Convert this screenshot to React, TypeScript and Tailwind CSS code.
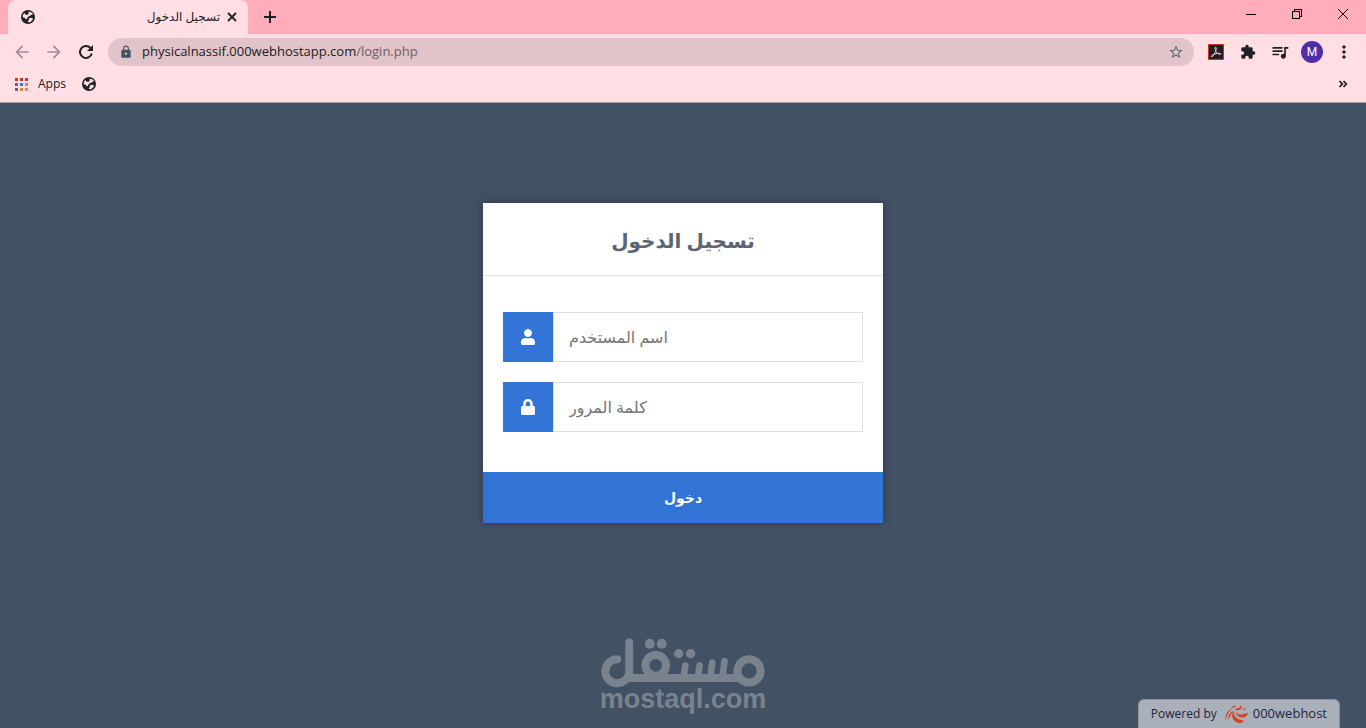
import React from 'react';
import { FaLock, FaUser } from 'react-icons/fa';
import {
  MdArrowBack,
  MdArrowForward,
  MdExtension,
  MdLock,
  MdMoreVert,
  MdQueueMusic,
  MdStarOutline,
} from 'react-icons/md';

const APP_DOTS = [
  '#c5381f', '#c5381f', '#c5381f',
  '#5b6574', '#2f74e0', '#d98a3a',
  '#5b6574', '#d98a3a', '#d98a3a',
];

// Default favicon: dark globe with light continents
const Globe: React.FC = () => (
  <svg viewBox="0 0 14 14" className="size-[14px]">
    <circle cx="7" cy="7" r="7" fill="#202124" />
    <path
      d="M7.500 1.700C9.500 1.500 11.300 2.600 12.200 4.300L10.800 4.600 9.400 5.800 7.600 5.900 7.400 7.400 5.800 7.600 6.200 9 4.800 9.300 3.600 7.700 1.700 7.200C1.600 5.600 2.300 4 3.400 3L4.400 4.600 6.200 5 7.800 3.600z"
      fill="#ffdee4"
    />
    <path d="M8 8.200l2.400-.4 1.700.9c-.7 1.900-2.200 3.200-4.100 3.600l-1.400-.5 1-1.400z" fill="#ffdee4" />
  </svg>
);

const TabStrip: React.FC = () => (
  <div className="flex h-[34px] items-stretch bg-[#ffacbb] pl-2">
    <div className="flex w-60 items-center rounded-t-lg bg-[#ffdee4] pr-2 pl-[13px]">
      <Globe />
      <span dir="rtl" className="flex-1 pr-1 text-right text-xs">
        تسجيل الدخول
      </span>
      <button type="button" aria-label="Close tab">
        <svg viewBox="0 0 16 16" className="size-4" stroke="#202124" strokeWidth="1.800">
          <path d="M4 4l8 8M12 4l-8 8" />
        </svg>
      </button>
    </div>
    <button type="button" aria-label="New tab" className="px-3">
      <svg viewBox="0 0 20 20" className="size-5" stroke="#202124" strokeWidth="2">
        <path d="M10 4v12M4 10h12" />
      </svg>
    </button>
    {/* Window controls */}
    <div className="ml-auto flex items-center pb-[6px] text-black">
      <button type="button" aria-label="Minimize" className="flex w-[46px] justify-center">
        <svg viewBox="0 0 10 10" className="size-[10px]" stroke="currentColor" shapeRendering="crispEdges">
          <path d="M0 5.5h10" />
        </svg>
      </button>
      <button type="button" aria-label="Restore" className="flex w-[46px] justify-center">
        <svg viewBox="0 0 10 10" className="size-[10px]" fill="none" stroke="currentColor" shapeRendering="crispEdges">
          <path d="M.5 2.5h7v7h-7zM2.5 2.5v-2h7v7h-2" />
        </svg>
      </button>
      <button type="button" aria-label="Close" className="flex w-[46px] justify-center">
        <svg viewBox="0 0 10 10" className="size-[10px]" stroke="currentColor">
          <path d="M0 0l10 10M10 0L0 10" />
        </svg>
      </button>
    </div>
  </div>
);

const Toolbar: React.FC = () => (
  <div className="flex h-9 items-center pr-[6px] pl-3 text-[#202124]">
    <div className="flex items-center gap-3">
      <button type="button" aria-label="Back">
        <MdArrowBack className="size-5 text-[#9a8f98]" />
      </button>
      <button type="button" aria-label="Forward">
        <MdArrowForward className="size-5 text-[#9a8f98]" />
      </button>
      <button type="button" aria-label="Reload">
        <svg viewBox="0 0 20 20" className="size-5" fill="none" stroke="currentColor" strokeWidth="2">
          <path d="M15.800 11.500A6 6 0 1 1 14.500 6" />
          <path d="M17 3v6h-6z" fill="currentColor" stroke="none" />
        </svg>
      </button>
    </div>
    <div className="ml-3 flex h-7 flex-1 items-center rounded-full bg-[#e0c4c9] px-[10px]">
      <MdLock className="mx-px size-[14px] text-[#435165]" />
      <span className="flex-1 pl-2 text-[13px]">
        physicalnassif.000webhostapp.com<span className="text-[#6b6068]">/login.php</span>
      </span>
      <button type="button" aria-label="Bookmark this page">
        <MdStarOutline className="size-4 text-[#5b6574]" />
      </button>
    </div>
    <div className="ml-[6px] grid grid-cols-5">
      <button type="button" aria-label="Adobe Acrobat" className="flex w-8 items-center justify-center">
        <svg viewBox="0 0 16 16" className="size-4" fill="none">
          <path d="M.5.5h15v15H.5z" fill="#241c22" stroke="#c5381f" />
          <path
            d="M7.6 3.2c1.200 0 .6 3.200-.7 5.700-1.100 2.200-2.600 4.200-3.500 3.800-1-.6 1.300-2.300 4.500-3 3-.7 5.200-.4 5 .4-.3 1-3-.2-4.500-2C7 6.600 6.700 3.200 7.600 3.200z"
            stroke="#e8cdd6"
          />
        </svg>
      </button>
      <button type="button" aria-label="Extensions" className="flex w-8 items-center justify-center">
        <MdExtension className="size-4" />
      </button>
      <button type="button" aria-label="Media control" className="flex w-8 items-center justify-center">
        <MdQueueMusic className="size-5" />
      </button>
      <button type="button" aria-label="Profile" className="flex w-8 items-center justify-center">
        <span className="flex size-[22px] items-center justify-center rounded-full bg-[#512da8] font-[Roboto,sans-serif] text-xs text-white">
          M
        </span>
      </button>
      <button type="button" aria-label="Menu" className="flex w-8 items-center justify-center">
        <MdMoreVert className="size-5" />
      </button>
    </div>
  </div>
);

const BookmarksBar: React.FC = () => (
  <div className="flex h-8 items-center pr-[18px] pb-1 pl-[15px] text-[#202124]">
    <button type="button" className="flex items-center gap-[10px] text-xs">
      <span className="grid grid-cols-3 gap-[2px]">
        {APP_DOTS.map((color, i) => (
          <span key={i} className="size-[3px]" style={{ backgroundColor: color }} />
        ))}
      </span>
      Apps
    </button>
    <button type="button" aria-label="Bookmark" className="ml-4">
      <Globe />
    </button>
    <button type="button" aria-label="More bookmarks" className="ml-auto">
      <svg viewBox="0 0 10 8" className="h-2 w-[10px]" fill="none" stroke="currentColor" strokeWidth="1.800">
        <path d="M1.500 1l2.800 3-2.800 3M5.500 1l2.800 3-2.800 3" />
      </svg>
    </button>
  </div>
);

interface FieldProps {
  id: string;
  type: string;
  placeholder: string;
  icon: React.ReactNode;
}

const Field: React.FC<FieldProps> = ({ id, type, placeholder, icon }) => (
  <div className="flex h-[50px]">
    <label
      htmlFor={id}
      aria-label={placeholder}
      className="flex w-[50px] items-center justify-center bg-[#3274d6] text-white"
    >
      {icon}
    </label>
    <input
      id={id}
      type={type}
      placeholder={placeholder}
      className="min-w-0 flex-1 border border-[#dee0e4] px-[15px] text-base outline-none placeholder:text-[#757575]"
    />
  </div>
);

const LoginCard: React.FC = () => (
  <div className="w-full max-w-[400px] bg-white shadow-[0_0_9px_rgba(0,0,0,0.3)]">
    <h1 className="border-b border-[#dee0e4] pt-[22px] pb-[18px] text-center text-xl leading-8 font-semibold text-[#5b6574]">
      تسجيل الدخول
    </h1>
    <form onSubmit={(e) => e.preventDefault()}>
      <div className="flex flex-col gap-5 px-5 pt-9 pb-10">
        <Field id="username" type="text" placeholder="اسم المستخدم" icon={<FaUser className="size-4" />} />
        <Field id="password" type="password" placeholder="كلمة المرور" icon={<FaLock className="size-4" />} />
      </div>
      <button type="submit" className="block h-[51px] w-full bg-[#3274d6] text-sm font-bold text-white">
        دخول
      </button>
    </form>
  </div>
);

const Watermark: React.FC = () => (
  <div className="pointer-events-none absolute inset-x-0 bottom-[18px] flex flex-col items-center text-[#7a828d]">
    <svg viewBox="62 35 494 150" className="h-[50px] w-[164px]" fill="none" stroke="currentColor" strokeWidth="24" strokeLinecap="round">
      <path d="M147 48v86a36 36 0 1 1-36-35" />
      <path d="M140 155h346" strokeLinecap="butt" />
      <circle cx="227" cy="117" r="31" />
      <circle cx="508" cy="134" r="35" />
      <path d="M316 118l-5 34M359 118l-5 34M397 109l-5 43M434 104l-6 48" strokeWidth="20" />
      <g fill="currentColor" stroke="none">
        <circle cx="209" cy="52" r="15" />
        <circle cx="245" cy="52" r="15" />
        <circle cx="296" cy="82" r="14" />
        <circle cx="332" cy="82" r="14" />
      </g>
    </svg>
    <span className="font-['Liberation_Sans',Arial,sans-serif] text-[27px] leading-[22px] font-bold">mostaql.com</span>
  </div>
);

const HostBadge: React.FC = () => (
  <a
    href="#"
    className="absolute right-[26px] bottom-0 flex h-[29px] items-center rounded-t-md border border-b-0 border-[#8b93a0] bg-[#a9b0ba] px-3 text-xs text-[#1f2440]"
  >
    Powered by
    <svg viewBox="0 0 24 20" className="mr-1 ml-2 h-5 w-6" fill="#d8401f">
      <path d="M.5 17C0 10 3 5 9 4.500 4 6.500 2 10 .5 17z" />
      <path d="M3.500 16C3 11 5 8 9 7 6 9.500 5 12 3.500 16z" />
      <path d="M8.500 7c-3.500 6 .5 11 5.500 12 2 .4 4-.6 4.500-2.800C13 16.500 8.500 13 8.500 7z" />
      <path d="M11 6.500c.5 4 4 5.500 12 2.200-.5 3.400-3 5-6 4.800-4-.3-6.500-3.300-6-7z" />
      <path d="M9.500 4.500c3 .5 5.500-.5 6.500-3.500 2 2.500-.5 5.500-3.500 5.200-1.400-.2-2.300-.8-3-1.700z" />
      <path d="M16.500 5.500c2-.3 3.500-1 4.500-2.500 0 2.500-1.800 3.800-4.500 2.500zM6 3.500c1.500-1.500 3.500-2 5.500-1.500C9.800 3 8 3.500 6 3.500z" />
    </svg>
    <span className="text-[13px] font-medium">000webhost</span>
  </a>
);

const App: React.FC = () => {
  return (
    <div className="flex min-h-screen flex-col bg-[#435165] font-['Open_Sans','Noto_Sans','DejaVu_Sans',sans-serif] text-[#202124]">
      <header className="border-b border-[#b39aa5] bg-[#ffdee4]">
        <TabStrip />
        <Toolbar />
        <BookmarksBar />
      </header>
      <main className="relative flex flex-1 flex-col items-center pt-[100px]">
        <LoginCard />
        <Watermark />
        <HostBadge />
      </main>
    </div>
  );
};

export default App;
